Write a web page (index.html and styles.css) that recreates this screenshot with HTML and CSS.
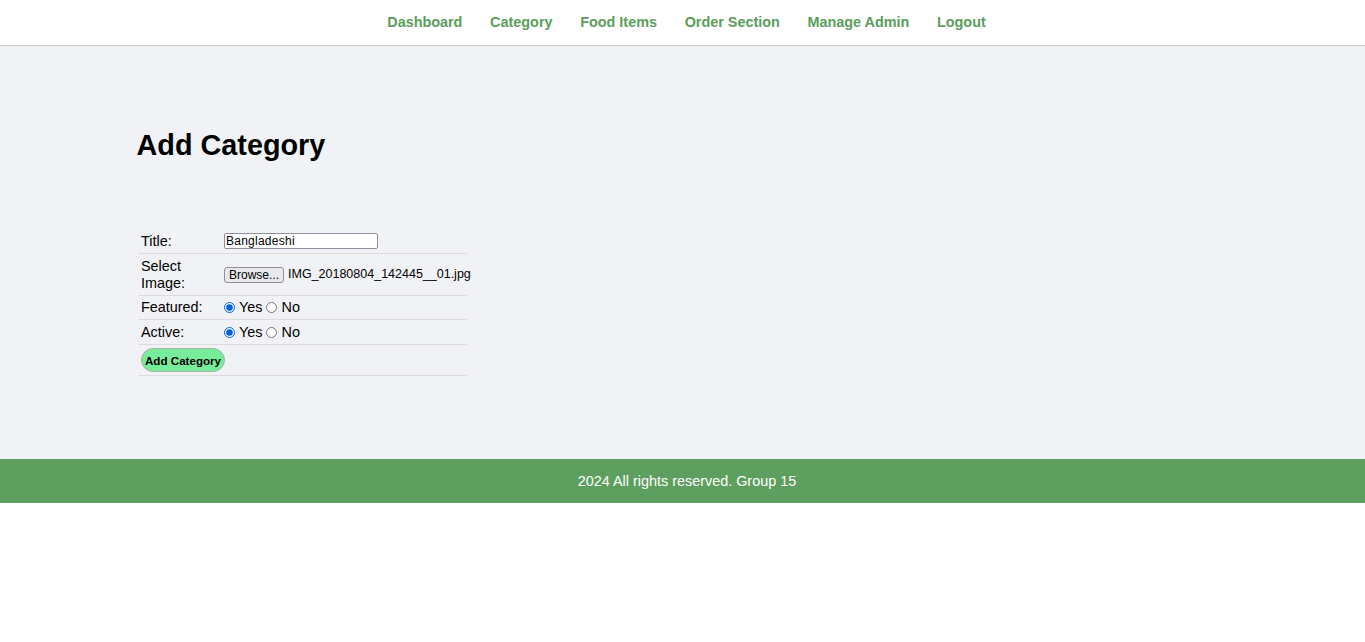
FILE: index.html
```html
<!DOCTYPE html>
<html lang="en">
<head>
<meta charset="utf-8">
<title>Add Category</title>
<link rel="stylesheet" href="styles.css">
</head>
<body>
<header class="menu">
  <nav class="nav">
    <a href="#">Dashboard</a>
    <a href="#">Category</a>
    <a href="#">Food Items</a>
    <a href="#">Order Section</a>
    <a href="#">Manage Admin</a>
    <a href="#">Logout</a>
  </nav>
</header>
<main class="main">
  <div class="wrapper">
    <h1 class="title">Add Category</h1>
    <form class="form">
      <table class="tbl">
        <colgroup><col class="col-label"><col class="col-value"></colgroup>
        <tr class="r-title">
          <td><div class="cell">Title:</div></td>
          <td><div class="cell"><input class="text-input" type="text" value="Bangladeshi"></div></td>
        </tr>
        <tr class="r-image">
          <td><div class="cell">Select Image:</div></td>
          <td><div class="cell nowrap"><button type="button" class="browse">Browse...</button><span class="file-name">IMG_20180804_142445__01.jpg</span></div></td>
        </tr>
        <tr class="r-featured">
          <td><div class="cell">Featured:</div></td>
          <td><div class="cell"><label class="opt"><input type="radio" name="featured" checked>Yes</label><label class="opt"><input type="radio" name="featured">No</label></div></td>
        </tr>
        <tr class="r-active">
          <td><div class="cell">Active:</div></td>
          <td><div class="cell"><label class="opt"><input type="radio" name="active" checked>Yes</label><label class="opt"><input type="radio" name="active">No</label></div></td>
        </tr>
        <tr class="r-submit">
          <td colspan="2"><div class="cell"><button type="button" class="btn-add">Add Category</button></div></td>
        </tr>
      </table>
    </form>
  </div>
</main>
<footer class="footer">2024 All rights reserved. Group 15</footer>
</body>
</html>
```

FILE: styles.css
```css
html, body {
  margin: 0;
  padding: 0;
  background: #ffffff;
}
body {
  font-family: "Liberation Sans", Arial, sans-serif;
  font-size: 14.4px;
  color: #000;
}
.menu {
  height: 45px;
  border-bottom: 1px solid #c4c4c4;
  display: flex;
  align-items: center;
  justify-content: center;
  background: #fff;
}
.nav {
  display: flex;
  gap: 27.7px;
  padding-left: 8px;
  padding-bottom: 2px;
}
.nav a {
  color: #5a9e5c;
  font-weight: bold;
  text-decoration: none;
  font-size: 14.4px;
}
.main {
  background: #f1f2f6;
  padding: 82px 0 83px;
}
.wrapper {
  width: 80%;
  margin: 0 auto;
}
.title {
  margin: 0 0 67px;
  font-size: 28.8px;
  font-weight: bold;
  line-height: normal;
  padding-top: 1px;
}
.tbl {
  border-collapse: collapse;
  table-layout: fixed;
  width: 329px;
  margin-left: 1.5px;
}
.col-label { width: 83px; }
.tbl td {
  padding: 0 3px;
  border-bottom: 1px solid #dcdcdc;
  vertical-align: middle;
}
.cell {
  display: flex;
  align-items: center;
  line-height: 17px;
}
.r-title .cell { height: 24px; }
.r-image .cell { height: 41px; }
.r-featured .cell { height: 23px; }
.r-active .cell { height: 24px; }
.r-submit .cell { height: 30px; }
.nowrap { white-space: nowrap; }
.text-input {
  box-sizing: border-box;
  width: 154px;
  height: 16px;
  margin: 0;
  padding: 0 1px;
  font-family: "Liberation Sans", Arial, sans-serif;
  font-size: 12px;
  letter-spacing: 0.25px;
  border: 1px solid #8f8f9d;
  border-radius: 2px;
  background: #fff;
}
.browse {
  box-sizing: border-box;
  width: 60px;
  height: 16px;
  margin: 0 4px 0 0;
  padding: 0;
  font-family: "Liberation Sans", Arial, sans-serif;
  font-size: 12px;
  line-height: 14px;
  background: #e9e9ed;
  border: 1px solid #8f8f9d;
  border-radius: 3px;
  color: #000;
  flex: none;
}
.file-name {
  font-size: 12.5px;
}
.opt {
  display: inline-flex;
  align-items: center;
  margin-right: 4px;
}
.opt input {
  margin: 0 4px 0 0;
  width: 11px;
  height: 11px;
  accent-color: #0060df;
}
.btn-add {
  box-sizing: border-box;
  height: 24px;
  padding: 0 3px;
  margin: 0;
  font-family: "Liberation Sans", Arial, sans-serif;
  font-size: 11.6px;
  font-weight: bold;
  color: #000;
  background: #77ec9a;
  border: 1px solid #a3b3a8;
  border-radius: 12px;
}
.footer {
  height: 44px;
  background: #5d9f5e;
  color: #fff;
  display: flex;
  align-items: center;
  justify-content: center;
  font-size: 14.4px;
  padding-left: 9px;
}
```
